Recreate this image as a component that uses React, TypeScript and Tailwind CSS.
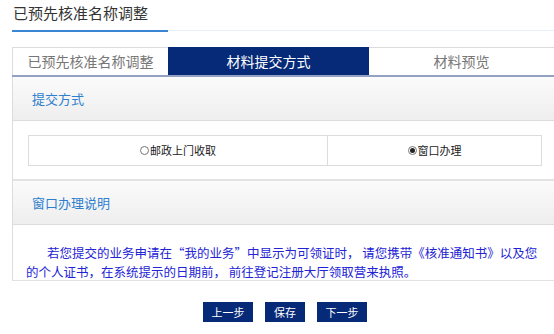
import React from 'react';

const font = { fontFamily: '"Microsoft YaHei", "Noto Sans CJK SC", sans-serif' };

function Radio({ checked }: { checked?: boolean }) {
  return (
    <span className="inline-flex size-[9px] items-center justify-center rounded-full border border-[#777] bg-white mr-[1px]">
      {checked && <span className="size-[5px] rounded-full bg-[#222]" />}
    </span>
  );
}

function SectionHeader({ title }: { title: string }) {
  return (
    <div className="h-[44px] flex items-center pl-[19px] text-[13px] text-[#2f7fcf] bg-gradient-to-b from-[#fbfbfb] to-[#eeeeee] border-b border-[#dcdcdc]">
      {title}
    </div>
  );
}

export default function App() {
  return (
    <div className="w-[554px] h-[334px] bg-white overflow-hidden" style={font}>
      {/* Page title */}
      <div className="pl-[13px] pt-[3px] text-[15px] text-[#333] leading-[20px]">已预先核准名称调整</div>
      <div className="mt-[7px] ml-[12px] flex">
        <div className="w-[156px] h-[2px] bg-[#3a86d4]" />
        <div className="flex-1 h-[1px] bg-[#e8f1fb]" />
      </div>

      {/* Tabs */}
      <div className="mt-[15px] ml-[12px] flex border-b-2 border-[#93a2c2] text-[14px]">
        <div className="w-[156px] h-[28px] flex items-center justify-center bg-white border-t border-l border-[#dcdcdc] text-[#777]">
          已预先核准名称调整
        </div>
        <div className="w-[201px] h-[28px] flex items-center justify-center bg-[#062a78] text-white">
          材料提交方式
        </div>
        <div className="flex-1 h-[28px] flex items-center justify-center bg-white border-t border-[#dcdcdc] text-[#777]">
          材料预览
        </div>
      </div>

      {/* Panel */}
      <div className="ml-[12px] border-l border-[#dcdcdc]">
        <SectionHeader title="提交方式" />
        <div className="h-[60px] pt-[14px] pl-[15px] pr-[12px] border-b-2 border-[#e2e2e2]">
          <div className="flex h-[31px] border border-[#dcdcdc] text-[11px] text-[#222]">
            <div className="w-[299px] flex items-center justify-center border-r border-[#dcdcdc]">
              <Radio />邮政上门收取
            </div>
            <div className="flex-1 flex items-center justify-center">
              <Radio checked />窗口办理
            </div>
          </div>
        </div>
        <SectionHeader title="窗口办理说明" />
        <div className="h-[56px] pt-[18px] pl-[13px] pr-[10px] border-b border-[#e2e2e2]">
          <p className="text-[12.5px] leading-[19px] text-[#2323d6] indent-[21px]">
            若您提交的业务申请在“我的业务”中显示为可领证时， 请您携带《核准通知书》以及您的个人证书，在系统提示的日期前， 前往登记注册大厅领取营来执照。
          </p>
        </div>
      </div>

      {/* Buttons */}
      <div className="mt-[21px] flex justify-center gap-[12px] pl-[16px] text-[11px] text-white">
        <button className="w-[50px] h-[20px] bg-[#062a78] flex items-center justify-center">上一步</button>
        <button className="w-[40px] h-[20px] bg-[#062a78] flex items-center justify-center">保存</button>
        <button className="w-[50px] h-[20px] bg-[#062a78] flex items-center justify-center">下一步</button>
      </div>
    </div>
  );
}
